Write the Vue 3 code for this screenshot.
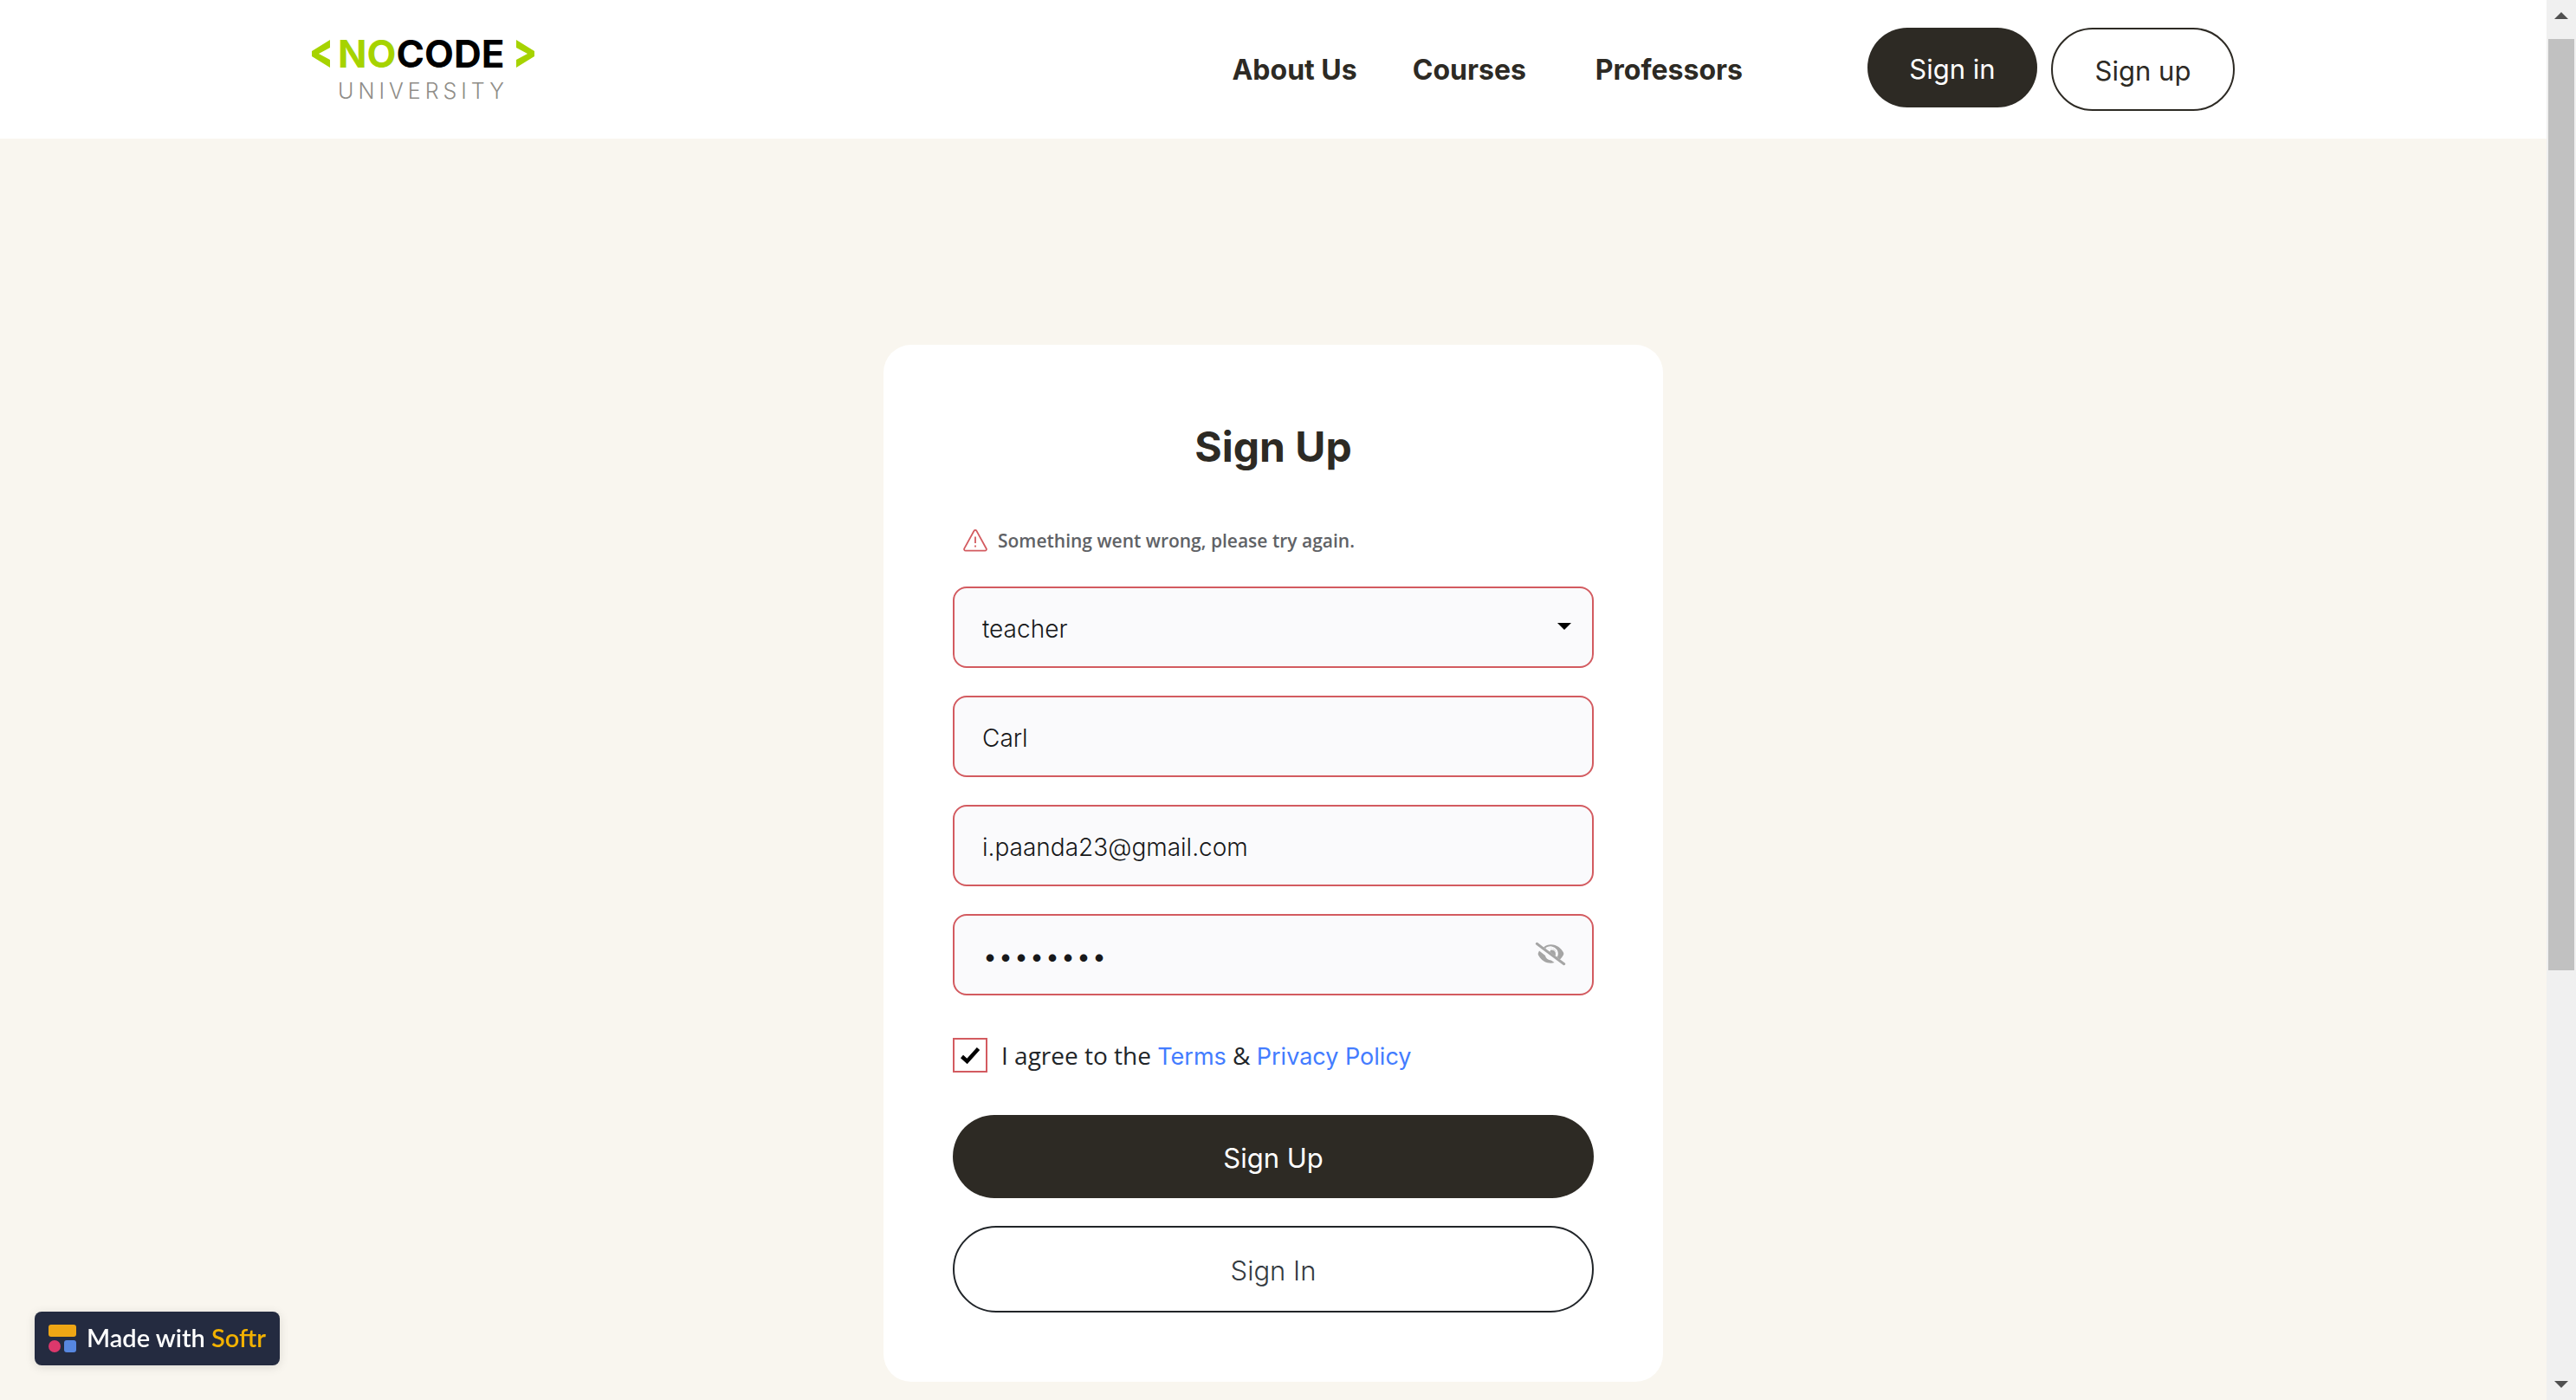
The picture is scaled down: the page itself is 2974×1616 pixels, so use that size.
<script setup>
import { ref } from 'vue'

const role = ref('teacher')
const name = ref('Carl')
const email = ref('i.paanda23@gmail.com')
const password = ref('password')
const agreed = ref(true)
const showPassword = ref(false)
</script>

<template>
  <div class="page">
    <div class="content">
      <header class="topbar">
        <div class="topbar-inner">
          <a class="logo" href="#" aria-label="NoCode University">
            <svg class="chevron" viewBox="0 0 22 34" aria-hidden="true">
              <path d="M21 1v9L8 17l13 7v9L0 20v-6z" fill="#a6d300" />
            </svg>
            <span class="logo-text">
              <span class="logo-main"><span class="logo-no">NO</span>CODE</span>
              <span class="logo-sub">UNIVERSITY</span>
            </span>
            <svg class="chevron" viewBox="0 0 22 34" aria-hidden="true">
              <path d="M1 1v9l13 7-13 7v9l21-13v-6z" fill="#a6d300" />
            </svg>
          </a>
          <nav class="nav">
            <a class="nav-link" href="#">About Us</a>
            <a class="nav-link" href="#">Courses</a>
            <a class="nav-link spaced" href="#">Professors</a>
          </nav>
          <div class="actions">
            <button class="pill dark sign-in" type="button">Sign in</button>
            <button class="pill outline sign-up" type="button">Sign up</button>
          </div>
        </div>
      </header>

      <main class="main">
        <section class="card">
          <h1 class="title">Sign Up</h1>
          <form class="form" @submit.prevent>
            <p class="error" role="alert">
              <svg class="error-icon" viewBox="0 0 28 26" aria-hidden="true">
                <path d="M12.500 1.800a1.700 1.700 0 0 1 3 0l11.200 20.400a1.700 1.700 0 0 1-1.500 2.500H2.800a1.700 1.700 0 0 1-1.500-2.500z" fill="none" stroke="#d35b60" stroke-width="1.800" />
                <path d="M14 8.500v7.500M14 18.500v2" stroke="#d35b60" stroke-width="1.800" />
              </svg>
              <span>Something went wrong, please try again.</span>
            </p>
            <div class="field">
              <select v-model="role" class="control" aria-label="Role">
                <option value="teacher">teacher</option>
                <option value="student">student</option>
              </select>
              <svg class="caret" viewBox="0 0 16 8" aria-hidden="true"><path d="M0 0h16L8 8z" /></svg>
            </div>
            <div class="field">
              <input v-model="name" class="control" type="text" aria-label="Full name" />
            </div>
            <div class="field">
              <input v-model="email" class="control" type="email" aria-label="Email" />
            </div>
            <div class="field">
              <input v-model="password" class="control secret" :type="showPassword ? 'text' : 'password'" aria-label="Password" />
              <button class="toggle" type="button" aria-label="Show password" @click="showPassword = !showPassword">
                <svg viewBox="0 0 36 28" aria-hidden="true">
                  <path d="M10 6.500C12.500 4.500 15.500 3.300 18.500 3.300c7 0 12 4.500 14.500 9.300a3 3 0 0 1 0 2.600c-1 2-2.300 3.800-4 5.300l-4.200-3.300a7.800 7.800 0 0 0-11.300-9z" fill="#a5a5a5" />
                  <path d="M13 7.800c4-2.700 9-1.600 11.500 1.700 1.600 2.500 1.700 5.200.6 7.600" fill="none" stroke="#fafafc" stroke-width="2" />
                  <path d="M18 9.700c3.500-.8 6 1.500 6 4.500 0 .9-.2 1.600-.5 2.300L17 11.500c.7-.4 1.100-1 1-1.800z" fill="#a5a5a5" />
                  <path d="M5 10.500 12 16c.8 3.300 3.600 5.400 6.800 5.400l3.800 2.700c-1.300.4-2.700.6-4.100.6-7 0-11.800-4.200-14.500-9.300a3 3 0 0 1 0-2.600z" fill="#a5a5a5" />
                  <path d="m2.300 2.300 31.400 23.400" stroke="#a5a5a5" stroke-width="3" stroke-linecap="round" />
                </svg>
              </button>
            </div>
            <div class="terms">
              <span class="check">
                <input id="agree" v-model="agreed" class="box" type="checkbox" />
                <svg v-if="agreed" class="tick" viewBox="0 0 24 20" aria-hidden="true">
                  <path d="m2.500 11.500 6 5.500L21.500 2.500" fill="none" stroke="#000" stroke-width="4.500" />
                </svg>
              </span>
              <label for="agree">
                I agree to the <a href="#">Terms</a> &amp; <a href="#">Privacy Policy</a>
              </label>
            </div>
            <button class="pill dark submit" type="submit">Sign Up</button>
            <button class="pill outline alternate" type="button">Sign In</button>
          </form>
        </section>
      </main>
    </div>

    <div class="scrollbar" aria-hidden="true">
      <svg class="arrow" viewBox="0 0 16 8"><path d="M8 0l8 8H0z" fill="#505050" /></svg>
      <div class="track"><div class="thumb"></div></div>
      <svg class="arrow" viewBox="0 0 16 8"><path d="M0 0h16L8 8z" fill="#505050" /></svg>
    </div>

    <a class="badge" href="#">
      <svg class="badge-icon" viewBox="0 0 32 32" aria-hidden="true">
        <rect width="32" height="14" rx="3" fill="#eea615" />
        <circle cx="7" cy="25" r="7" fill="#dc386c" />
        <rect x="18" y="18" width="14" height="14" rx="3" fill="#5787e0" />
      </svg>
      <span class="badge-text">Made with <span class="brand">Softr</span></span>
    </a>
  </div>
</template>

<style>
body {
  margin: 0;
  background: #f9f6ef;
}
</style>

<style scoped>
.page {
  display: grid;
  grid-template-columns: 1fr 34px;
  min-height: 100vh;
  font-family: Inter, "Liberation Sans", sans-serif;
  color: #2d2a24;
}

.page *,
.page *::before {
  box-sizing: border-box;
}

a {
  text-decoration: none;
}

.content {
  min-width: 0;
}

.topbar {
  background: #fff;
}

.topbar-inner {
  display: flex;
  align-items: flex-start;
  max-width: 2220px;
  height: 160px;
  margin: 0 auto;
  padding-top: 32px;
}

.logo {
  display: flex;
  gap: 8px;
  margin-right: auto;
  padding-top: 13px;
  color: #000;
}

.chevron {
  width: 22px;
  height: 34px;
}

.logo-text {
  display: flex;
  flex-direction: column;
}

.logo-main {
  font-size: 44px;
  font-weight: 700;
  line-height: 34px;
}

.logo-no {
  color: #a6d300;
}

.logo-sub {
  margin-top: 10px;
  color: #8f8d88;
  font-size: 25px;
  font-weight: 300;
  line-height: 32px;
  letter-spacing: 5px;
}

.nav {
  display: flex;
  gap: 64px;
  margin-right: 144px;
  line-height: 98px;
}

.nav-link {
  color: #2d2a24;
  font-size: 32px;
  font-weight: 700;
}

.spaced {
  margin-left: 16px;
}

.actions {
  display: flex;
  align-items: flex-start;
  gap: 16px;
}

.pill {
  padding: 2px 32px 0;
  border: 0;
  border-radius: 50px;
  font-family: inherit;
  font-size: 31px;
  font-weight: 400;
  white-space: nowrap;
  cursor: pointer;
}

.dark {
  background: #2d2a24;
  color: #fff;
}

.outline {
  border: 2px solid #2d2a24;
  background: #fff;
  color: #2d2a24;
}

.sign-in {
  width: 196px;
  height: 92px;
}

.sign-up {
  width: 212px;
  height: 96px;
}

.main {
  padding: 238px 32px 20px;
}

.card {
  max-width: 900px;
  margin: 0 auto;
  padding: 80px;
  border-radius: 32px;
  background: #fff;
}

.title {
  margin: 0 0 51px;
  padding-top: 2px;
  font-size: 48px;
  font-weight: 700;
  line-height: 72px;
  text-align: center;
}

.form {
  display: flex;
  flex-direction: column;
  gap: 32px;
}

.error {
  display: flex;
  align-items: center;
  gap: 12px;
  margin: 0;
  padding-left: 12px;
  color: #606266;
  font-family: "Open Sans", "Noto Sans", sans-serif;
  font-size: 21px;
  font-weight: 600;
  line-height: 42px;
}

.error-icon {
  width: 28px;
  height: 26px;
}

.field {
  position: relative;
}

.control {
  display: block;
  width: 100%;
  height: 94px;
  padding: 3px 32px 0;
  border: 2px solid #d35b60;
  border-radius: 16px;
  outline: 0;
  background: #fafafc;
  color: #17181a;
  appearance: none;
  font-family: inherit;
  font-size: 28px;
  font-weight: 300;
}

.secret {
  font-size: 32px;
}

.caret {
  position: absolute;
  top: 42px;
  right: 26px;
  width: 16px;
  height: 8px;
  pointer-events: none;
}

.toggle {
  position: absolute;
  top: 32px;
  right: 32px;
  width: 36px;
  height: 28px;
  padding: 0;
  border: 0;
  background: none;
  cursor: pointer;
}

.toggle svg {
  display: block;
}

.terms {
  display: flex;
  align-items: center;
  gap: 16px;
  height: 42px;
  margin: 16px 0;
  color: #212529;
  font-family: "Open Sans", "Noto Sans", sans-serif;
  font-size: 28px;
  font-weight: 500;
}

.terms a {
  color: #437cff;
  font-family: Inter, sans-serif;
  font-size: 27px;
  font-weight: 400;
}

.check {
  display: grid;
  place-items: center;
}

.check > * {
  grid-area: 1 / 1;
}

.box {
  width: 40px;
  height: 40px;
  margin: 0;
  border: 2px solid #d35b60;
  background: #fff;
  appearance: none;
}

.tick {
  width: 24px;
  height: 20px;
  pointer-events: none;
}

.submit {
  height: 96px;
}

.alternate {
  height: 100px;
  border-color: #212529;
  color: #343a40;
  font-weight: 300;
}

.scrollbar {
  position: sticky;
  top: 0;
  display: flex;
  flex-direction: column;
  align-items: center;
  height: 100vh;
  padding: 14px 2px;
  background: #f0f0f0;
}

.arrow {
  flex: none;
  width: 16px;
  height: 8px;
}

.track {
  flex: 1;
  width: 100%;
  padding: 23px 0 14px;
}

.thumb {
  height: 70%;
  background: #c1c1c1;
}

.badge {
  position: fixed;
  bottom: 40px;
  left: 40px;
  display: flex;
  align-items: center;
  gap: 12px;
  height: 62px;
  padding: 0 16px;
  border-radius: 8px;
  background: #242b40;
  box-shadow: 0 2px 12px rgba(0, 0, 0, 0.12);
  color: #fff;
  font-family: Lato, sans-serif;
  font-size: 29px;
  font-weight: 600;
}

.badge-icon {
  width: 32px;
  height: 32px;
}

.badge-text {
  padding-bottom: 3px;
}

.brand {
  color: #f2b100;
}
</style>
